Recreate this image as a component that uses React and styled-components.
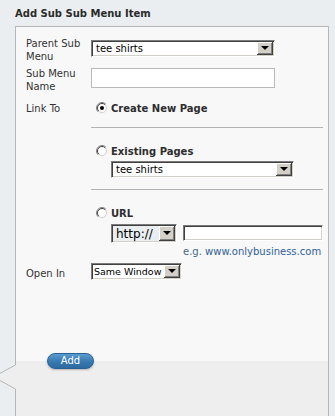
import React from 'react';
import styled, { createGlobalStyle } from 'styled-components';

const GlobalStyle = createGlobalStyle`
  html, body {
    margin: 0;
    padding: 0;
    background: #eaeef0;
  }
  body {
    font-family: Tahoma, "DejaVu Sans", Verdana, sans-serif;
    font-size: 10px;
    color: #333;
  }
`;

const Page = styled.div`
  width: 335px;
  height: 416px;
  overflow: hidden;
  padding-left: 15px;
  box-sizing: border-box;
`;

const Title = styled.h2`
  margin: 0;
  padding-top: 7px;
  height: 19px;
  line-height: 14px;
  font-size: 10px;
  font-weight: bold;
  color: #2b2b2b;
`;

const Panel = styled.div`
  position: relative;
  width: 314px;
  height: 400px;
  box-sizing: border-box;
  border: 1px solid #b6b6b6;
  display: flex;
  flex-direction: column;
`;

const Body = styled.div`
  height: 334px;
  background: #f8f8f8;
  padding: 10px 0 0 10px;
  box-sizing: border-box;
`;

const Footer = styled.div`
  flex: 1;
  background: #eeeeee;
  padding-left: 31px;
`;

const Notch = styled.svg`
  position: absolute;
  left: -16px;
  top: 338px;
`;

const Row = styled.div`
  display: grid;
  grid-template-columns: 65px 232px;
  align-items: start;
  margin-top: ${p => p.$mt || 0}px;
`;

const Label = styled.div`
  line-height: 13px;
  color: #333;
  padding-top: ${p => p.$pt || 0}px;
`;

const Field = styled.div`
  padding-top: ${p => p.$pt || 0}px;
`;

const Select = styled.div`
  display: flex;
  width: ${p => p.$w}px;
  height: ${p => p.$h || 17}px;
  box-sizing: border-box;
  background: ${p => p.$bg || '#fff'};
  border-style: solid;
  border-width: 1px;
  border-color: #7b7b7b #ffffff #ffffff #7b7b7b;
  box-shadow: inset 1px 1px 0 #404040, inset -1px -1px 0 #d4d0c8;
  margin-top: ${p => p.$mt || 0}px;
`;

const SelectText = styled.span`
  flex: 1;
  padding-left: ${p => p.$pl ?? 4}px;
  padding-top: 1px;
  font-size: ${p => p.$fs || 10}px;
  line-height: ${p => (p.$fs || 10) + 4}px;
  color: #000;
  white-space: nowrap;
  overflow: hidden;
`;

const DropButton = styled.span`
  flex: none;
  width: 16px;
  margin: 1px 1px 1px 0;
  box-sizing: border-box;
  background: #d4d0c8;
  border-right: 1px solid #404040;
  border-bottom: 1px solid #404040;
  box-shadow: inset 1px 1px 0 #ffffff, inset -1px -1px 0 #808080;
  display: flex;
  align-items: center;
  justify-content: center;
  &::after {
    content: '';
    width: 0;
    height: 0;
    border-left: 4px solid transparent;
    border-right: 4px solid transparent;
    border-top: 4px solid #000;
  }
`;

const TextInput = styled.div`
  width: 184px;
  height: 20px;
  box-sizing: border-box;
  background: #fff;
  border: 1px solid #b9b9b9;
`;

const InsetInput = styled.div`
  width: 140px;
  height: 16px;
  box-sizing: border-box;
  background: #fff;
  border-style: solid;
  border-width: 1px;
  border-color: #7b7b7b #ffffff #ffffff #7b7b7b;
  box-shadow: inset 1px 1px 0 #404040, inset -1px -1px 0 #d4d0c8;
  margin-top: 1px;
`;

const Option = styled.label`
  display: flex;
  align-items: center;
  gap: 3px;
  height: 14px;
  padding-left: 5px;
  font-weight: bold;
  color: #2d2d2d;
  margin-top: ${p => p.$mt || 0}px;
`;

const Divider = styled.div`
  height: 1px;
  background: #b3b3b3;
  margin-top: ${p => p.$mt || 0}px;
`;

const Indent = styled.div`
  padding-left: 20px;
  margin-top: ${p => p.$mt || 0}px;
`;

const UrlLine = styled.div`
  display: flex;
  align-items: flex-start;
  gap: 6px;
`;

const Hint = styled.div`
  margin: 2px 0 0 72px;
  line-height: 14px;
  color: #44698c;
  & a {
    color: #2f5f99;
    text-decoration: none;
  }
`;

const AddButton = styled.button`
  width: 47px;
  height: 16px;
  margin-top: -8px;
  padding: 0;
  border: 1px solid #2a6194;
  border-radius: 8px;
  background: linear-gradient(#5b9dd0, #3779b0 55%, #2d6aa0);
  box-shadow: 0 1px 2px rgba(0, 0, 0, 0.25);
  color: #fff;
  font-family: inherit;
  font-size: 10px;
  line-height: 14px;
  display: block;
`;

const Radio = ({ checked }) => (
  <svg width="12" height="12" viewBox="0 0 12 12">
    <circle cx="6" cy="6" r="5.5" fill="#fff" />
    <path d="M2.11 9.89 A5.5 5.5 0 0 1 9.89 2.11" fill="none" stroke="#808080" strokeWidth="1" />
    <path d="M9.89 2.11 A5.5 5.5 0 0 1 2.11 9.89" fill="none" stroke="#f0f0f0" strokeWidth="1" />
    <path d="M2.8 9.2 A4.5 4.5 0 0 1 9.2 2.8" fill="none" stroke="#404040" strokeWidth="1" />
    <path d="M9.2 2.8 A4.5 4.5 0 0 1 2.8 9.2" fill="none" stroke="#d4d0c8" strokeWidth="1" />
    {checked && <circle cx="6" cy="6" r="2" fill="#000" />}
  </svg>
);

const Dropdown = ({ value, w, h, bg, fs, pl, mt }) => (
  <Select $w={w} $h={h} $bg={bg} $mt={mt}>
    <SelectText $fs={fs} $pl={pl}>{value}</SelectText>
    <DropButton />
  </Select>
);

export default function App() {
  return (
    <Page>
      <GlobalStyle />
      <Title>Add Sub Sub Menu Item</Title>
      <Panel>
        <Body>
          <Row>
            <Label>Parent Sub<br />Menu</Label>
            <Field $pt={3}>
              <Dropdown value="tee shirts" w={184} />
            </Field>
          </Row>
          <Row $mt={4}>
            <Label>Sub Menu<br />Name</Label>
            <Field $pt={1}>
              <TextInput />
            </Field>
          </Row>
          <Row $mt={8}>
            <Label $pt={1}>Link To</Label>
            <Field>
              <Option>
                <Radio checked />
                Create New Page
              </Option>
              <Divider $mt={12} />
              <Option $mt={16}>
                <Radio />
                Existing Pages
              </Option>
              <Indent $mt={3}>
                <Dropdown value="tee shirts" w={183} />
              </Indent>
              <Divider $mt={11} />
              <Option $mt={16}>
                <Radio />
                URL
              </Option>
              <Indent $mt={4}>
                <UrlLine>
                  <Dropdown value="http://" w={66} h={19} bg="#eaeef1" fs={12} />
                  <InsetInput />
                </UrlLine>
                <Hint>
                  e.g. <a href="#">www.onlybusiness.com</a>
                </Hint>
              </Indent>
            </Field>
          </Row>
          <Row $mt={4}>
            <Label $pt={4}>Open In</Label>
            <Field>
              <Dropdown value="Same Window" w={91} fs={9.5} pl={2} />
            </Field>
          </Row>
        </Body>
        <Footer>
          <AddButton>Add</AddButton>
        </Footer>
        <Notch width="16" height="25" viewBox="0 0 16 25">
          <polygon points="16,0 15,0 0,8 0,16 15,24 16,24" fill="#eeeeee" />
          <path d="M15.5 0 L0 8.3 M0 15.5 L15.5 24" stroke="#b6b6b6" strokeWidth="1" fill="none" />
        </Notch>
      </Panel>
    </Page>
  );
}
